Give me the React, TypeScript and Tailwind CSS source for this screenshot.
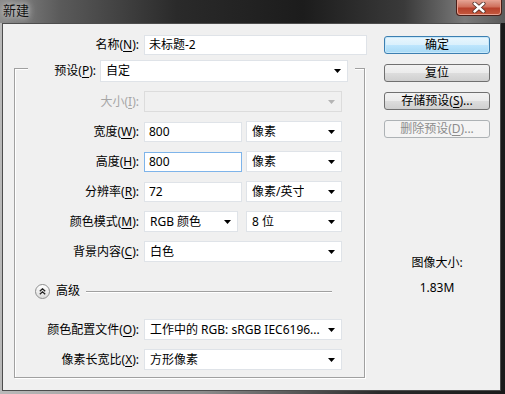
import React from "react";

const Tri = ({ color = "#000" }: { color?: string }) => (
  <svg width="7" height="4" viewBox="0 0 7 4" className="shrink-0">
    <path d="M0 0h7L3.5 4z" fill={color} />
  </svg>
);

const Acc = ({ k }: { k: string }) => (
  <>
    (<span className="underline underline-offset-[2px]">{k}</span>)
  </>
);

const Input = ({ value, w, focus }: { value: string; w: string; focus?: boolean }) => (
  <div
    className={`${w} h-[20px] bg-white border flex items-center pl-[4px] ${
      focus ? "border-[#7eb4ea]" : "border-[#dfe3e8]"
    }`}
  >
    {value}
  </div>
);

const Select = ({
  value,
  w,
  disabled,
  h = "h-[21px]",
}: {
  value?: string;
  w: string;
  disabled?: boolean;
  h?: string;
}) => (
  <div
    className={`${w} ${h} border flex items-center justify-between pl-[5px] pr-[6px] ${
      disabled ? "bg-[#f0f0f0] border-[#dcdcdc]" : "bg-white border-[#dfe3e8]"
    }`}
  >
    <span className="truncate">{value}</span>
    <Tri color={disabled ? "#b4b4b4" : "#000"} />
  </div>
);

const Row = ({
  label,
  disabled,
  children,
}: {
  label: React.ReactNode;
  disabled?: boolean;
  children: React.ReactNode;
}) => (
  <div className="flex items-center h-[21px]">
    <div className={`w-[124px] text-right ${disabled ? "text-[#a6a6a6]" : "text-black"}`}>{label}</div>
    <div className="ml-[5px] flex items-center gap-[4px]">{children}</div>
  </div>
);

const Btn = ({
  children,
  kind = "normal",
}: {
  children: React.ReactNode;
  kind?: "normal" | "default" | "disabled";
}) => {
  const styles = {
    normal:
      "border-[#707070] bg-[linear-gradient(#f2f2f2_0%,#ebebeb_50%,#dddddd_50%,#cfcfcf_100%)] text-black",
    default:
      "border-[#3c7fb1] bg-[linear-gradient(#eaf6fd_0%,#d9f0fc_50%,#bee6fd_50%,#a7d9f5_100%)] text-black shadow-[inset_0_0_0_1px_#c7e8fa]",
    disabled: "border-[#adb2b5] bg-[#f4f4f4] text-[#8c8c8c]",
  }[kind];
  return (
    <div className={`w-[106px] h-[18px] rounded-[3px] border flex items-center justify-center ${styles}`}>
      {children}
    </div>
  );
};

export default function App() {
  return (
    <div className="w-[505px] h-[394px] overflow-hidden flex flex-col bg-[linear-gradient(90deg,#b9b9b9_0%,#8c8c8c_40%,#2a2a2a_75%,#1a1a1a_100%)] font-['Noto_Sans','Noto_Sans_CJK_SC',sans-serif] text-[12px] leading-[16px] text-black">
      {/* title bar */}
      <div className="h-[23px] shrink-0 flex items-start justify-between bg-[linear-gradient(90deg,#8a8a8a_0%,#5a5a5a_12%,#2a2a2a_35%,#1c1c1c_60%,#3a3a3a_80%,#7a7a7a_92%,#5a5a5a_100%)]">
        <div className="pl-[3px] pt-[2px] text-[13px] text-[#111] [text-shadow:0_0_6px_#ddd,0_0_10px_#ccc]">新建</div>
        <div className="mr-[3px] w-[46px] h-[16px] rounded-b-[4px] border border-t-0 border-[#4a1f18] bg-[linear-gradient(#e3a596_0%,#d0705c_45%,#b8412c_55%,#c45a3e_100%)] flex items-center justify-center shadow-[inset_0_0_0_1px_#e8a090]">
          <svg width="14" height="11" viewBox="0 0 14 11">
            <path d="M2.5 1.5l9 8M11.5 1.5l-9 8" stroke="#4a2a22" strokeWidth="4" strokeLinecap="round" />
            <path d="M2.5 1.5l9 8M11.5 1.5l-9 8" stroke="#fff" strokeWidth="2.4" strokeLinecap="round" />
          </svg>
        </div>
      </div>

      {/* dialog body */}
      <div className="ml-[2px] w-[499px] h-[368px] shrink-0 border border-[#4d4d4d] bg-[#f0f0f0] flex">
        {/* left column */}
        <div className="w-[364px] pt-[11px]">
          <div className="flex items-center h-[20px]">
            <div className="w-[136px] text-right">
              名称<Acc k="N" />:
            </div>
            <div className="ml-[5px]">
              <Input value="未标题-2" w="w-[223px]" />
            </div>
          </div>

          {/* preset group */}
          <div className="relative ml-[11px] mt-[13px] w-[351px] h-[310px] border border-[#a0a0a0] shadow-[inset_1px_1px_0_#fff,1px_1px_0_#fff] pt-[22px]">
            <div className="absolute left-[13px] top-[-9px] w-[327px] h-[21px] bg-[#f0f0f0] flex items-center">
              <div className="w-[68px] text-right">
                预设<Acc k="P" />:
              </div>
              <div className="ml-[4px]">
                <Select value="自定" w="w-[248px]" h="h-[22px]" />
              </div>
            </div>

            <div className="flex flex-col gap-[9px]">
              <Row
                disabled
                label={
                  <>
                    大小<Acc k="I" />:
                  </>
                }
              >
                <Select w="w-[198px]" disabled />
              </Row>
              <Row
                label={
                  <>
                    宽度<Acc k="W" />:
                  </>
                }
              >
                <Input value="800" w="w-[98px]" />
                <Select value="像素" w="w-[96px]" />
              </Row>
              <Row
                label={
                  <>
                    高度<Acc k="H" />:
                  </>
                }
              >
                <Input value="800" w="w-[98px]" focus />
                <Select value="像素" w="w-[96px]" />
              </Row>
              <Row
                label={
                  <>
                    分辨率<Acc k="R" />:
                  </>
                }
              >
                <Input value="72" w="w-[98px]" />
                <Select value="像素/英寸" w="w-[96px]" />
              </Row>
              <Row
                label={
                  <>
                    颜色模式<Acc k="M" />:
                  </>
                }
              >
                <Select value="RGB 颜色" w="w-[94px]" />
                <div className="ml-[4px]">
                  <Select value="8 位" w="w-[96px]" />
                </div>
              </Row>
              <Row
                label={
                  <>
                    背景内容<Acc k="C" />:
                  </>
                }
              >
                <Select value="白色" w="w-[198px]" />
              </Row>
            </div>

            {/* advanced */}
            <div className="mt-[21px] h-[16px] flex items-center">
              <div className="ml-[20px] w-[15px] h-[15px] rounded-full border border-[#8e8f8f] bg-[linear-gradient(#ffffff,#dcdcdc)] flex items-center justify-center">
                <svg width="7" height="7" viewBox="0 0 7 7">
                  <path d="M0.8 3.2L3.5 0.8L6.2 3.2M0.8 6.2L3.5 3.8L6.2 6.2" stroke="#222" strokeWidth="1.3" fill="none" />
                </svg>
              </div>
              <span className="ml-[6px]">高级</span>
              <div className="ml-[6px] w-[246px] h-0 border-t border-[#a0a0a0] shadow-[0_1px_0_#fff]" />
            </div>

            <div className="mt-[20px] flex flex-col gap-[9px]">
              <Row
                label={
                  <>
                    颜色配置文件<Acc k="O" />:
                  </>
                }
              >
                <Select value="工作中的 RGB: sRGB IEC6196..." w="w-[198px]" />
              </Row>
              <Row
                label={
                  <>
                    像素长宽比<Acc k="X" />:
                  </>
                }
              >
                <Select value="方形像素" w="w-[198px]" />
              </Row>
            </div>
          </div>
        </div>

        {/* right column */}
        <div className="ml-[17px] w-[106px] pt-[12px] flex flex-col">
          <div className="flex flex-col gap-[10px]">
            <Btn kind="default">确定</Btn>
            <Btn>复位</Btn>
            <Btn>
              <span>
                存储预设<Acc k="S" />...
              </span>
            </Btn>
            <Btn kind="disabled">
              <span>
                删除预设<Acc k="D" />...
              </span>
            </Btn>
          </div>
          <div className="mt-[117px] text-center">图像大小:</div>
          <div className="mt-[9px] text-center">1.83M</div>
        </div>
      </div>
    </div>
  );
}
